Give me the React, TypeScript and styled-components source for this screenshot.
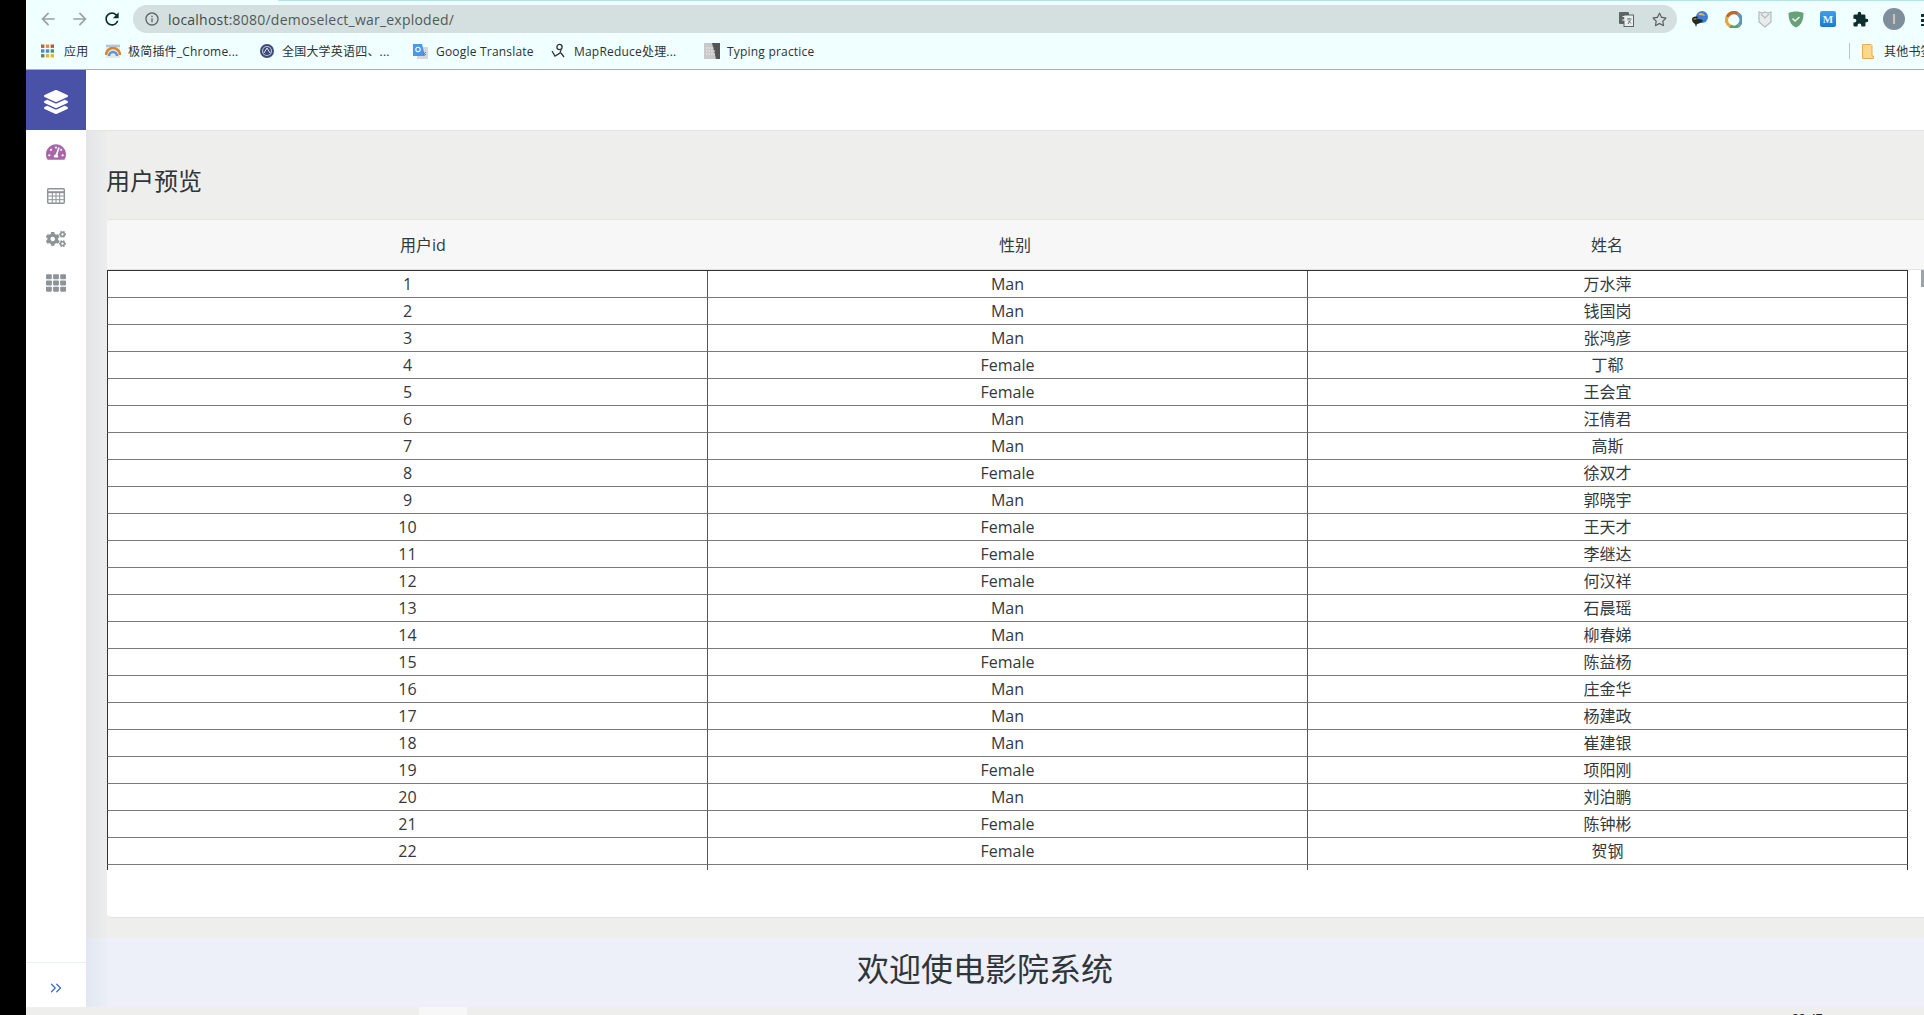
import React from 'react'
import styled, { createGlobalStyle } from 'styled-components'
import { FaLayerGroup, FaTachometerAlt, FaCogs, FaTh, FaRegStar } from 'react-icons/fa'
import { MdArrowBack, MdArrowForward, MdRefresh, MdInfoOutline, MdExtension } from 'react-icons/md'
import { ChevronsRight } from 'lucide-react'

const FONT = `"Open Sans", "Noto Sans CJK SC", sans-serif`

const GlobalStyle = createGlobalStyle`
  html, body {
    margin: 0;
    padding: 0;
    height: 100%;
    overflow: hidden;
    background: #000;
    font-family: ${FONT};
  }
`

const Screen = styled.div`
  display: flex;
  width: 1924px;
  height: 1015px;
  overflow: hidden;
`

const BlackBar = styled.div`
  flex: 0 0 26px;
  background: #000;
`

const Desktop = styled.div`
  flex: 1;
  min-width: 0;
  display: flex;
  flex-direction: column;
`

const Chrome = styled.div`
  height: 70px;
  flex: 0 0 70px;
  box-sizing: border-box;
  background: #f0ffff;
  border-bottom: 1px solid #aab0b0;
  display: flex;
  flex-direction: column;
`

const TabLine = styled.div`
  height: 1px;
  flex: none;
  background: linear-gradient(90deg, #f0ffff 252px, #b2e6e6 252px);
`

const NavRow = styled.div`
  height: 32px;
  padding-top: 4px;
  display: flex;
  align-items: flex-start;
`

const NavButtons = styled.div`
  width: 108px;
  height: 28px;
  padding-left: 12px;
  box-sizing: border-box;
  display: flex;
  align-items: center;
  gap: 12px;
`

const NavIcon = styled.span<{ $color: string }>`
  display: flex;
  width: 20px;
  color: ${(p) => p.$color};
  font-size: 20px;
`

const Omnibox = styled.div`
  width: 1544px;
  flex: none;
  height: 28px;
  box-sizing: border-box;
  background: #d4e0e0;
  border-radius: 14px;
  padding: 0 10px 0 11px;
  display: flex;
  align-items: center;
  font-size: 14px;
  color: #3f4a4b;
  letter-spacing: 0.016em;

  svg {
    flex: none;
  }
`

const UrlText = styled.span`
  margin-left: 8px;
  flex: 1;

  b {
    font-weight: 400;
    color: #4f5a5b;
  }
`

const OmniIcon = styled.span`
  display: flex;
  margin-left: 18px;
  color: #5f6464;
`

const Extensions = styled.div`
  display: flex;
  height: 28px;
  align-items: center;
  margin-left: 14px;
  gap: 16px;
`

const Avatar = styled.div`
  width: 22px;
  height: 22px;
  margin-left: -2px;
  border-radius: 50%;
  background: #7e8f9c;
  color: #dfe7ea;
  font-size: 14px;
  line-height: 22px;
  text-align: center;
`

const MenuDots = styled.div`
  width: 3px;
  height: 13px;
  flex: none;
  background: radial-gradient(circle at center, #0f2d2e 1.4px, transparent 1.6px) 0 0 / 3px 5px;
`

const Bookmarks = styled.div`
  flex: 1;
  display: flex;
  align-items: center;
  padding: 0 0 4px 15px;
  font-size: 12px;
  letter-spacing: 0.2px;
  color: #2d3233;
  white-space: nowrap;
`

const Bookmark = styled.span<{ $width: number }>`
  width: ${(p) => p.$width}px;
  flex: none;
  display: flex;
  align-items: center;
  gap: 7px;
`

const BookmarkGap = styled.span`
  flex: 1;
`

const Divider = styled.span`
  width: 1px;
  height: 16px;
  background: #bcc4c4;
  margin-right: 12px;
`

const OtherBookmarks = styled.span`
  display: flex;
  align-items: center;
  gap: 10px;
  width: 62px;
  overflow: hidden;
  flex: none;

  svg {
    flex: none;
  }
`

const Page = styled.div`
  flex: 1;
  min-height: 0;
  display: flex;
  flex-direction: column;
  background: #eeeeed;
`

const PageBody = styled.div`
  height: 937px;
  flex: none;
  display: flex;
`

const Sidebar = styled.aside`
  flex: 0 0 60px;
  background: #fff;
  display: flex;
  flex-direction: column;
`

const Logo = styled.div`
  height: 60px;
  box-sizing: border-box;
  padding-top: 3px;
  flex: none;
  background: #4a52a8;
  color: #fff;
  font-size: 24px;
  display: flex;
  align-items: center;
  justify-content: center;
`

const SideMenu = styled.nav`
  flex: 1;
  display: flex;
  flex-direction: column;
  align-items: center;
`

const SideItem = styled.div<{ $color?: string }>`
  height: 43.7px;
  display: flex;
  align-items: center;
  justify-content: center;
  color: ${(p) => p.$color || '#8e9396'};
  font-size: 20px;
`

const SideFooter = styled.div`
  height: 45px;
  flex: none;
  box-sizing: border-box;
  padding-top: 5px;
  border-top: 1px solid #ebf0f8;
  color: #3f6fd0;
  display: flex;
  align-items: center;
  justify-content: center;
`

const Main = styled.main`
  flex: 1;
  min-width: 0;
  display: flex;
  flex-direction: column;
  position: relative;
`

const EdgeShade = styled.div`
  position: absolute;
  left: 0;
  top: 61px;
  bottom: 0;
  width: 21px;
  background: linear-gradient(90deg, rgba(40, 80, 140, 0.06), rgba(40, 80, 140, 0.008));
`

const TopBar = styled.header`
  height: 61px;
  flex: none;
  background: #fff;
  border-bottom: 1px solid #e3e3e3;
  box-sizing: border-box;
`

const Content = styled.section`
  position: relative;
  flex: 1;
  min-height: 0;
  padding: 0 0 0 21px;
`

const Title = styled.h3`
  margin: 0 0 0 -1px;
  height: 88px;
  padding-top: 33px;
  box-sizing: border-box;
  font-size: 24px;
  font-weight: 400;
  line-height: 33px;
  color: #2f353a;
`

const Card = styled.div`
  width: 1900px;
  height: 699px;
  box-sizing: border-box;
  background: #fff;
  border: 1px solid #e2e2e2;
  border-left: 0;
  border-radius: 4px 0 0 4px;
  overflow: hidden;
`

const CardHeader = styled.div`
  height: 50px;
  box-sizing: border-box;
  padding: 0 20px 2px;
  background: #f7f7f7;
  border-bottom: 1px solid #e2e2e2;
  display: grid;
  grid-template-columns: repeat(3, 592px);
  align-items: center;
  text-align: center;
  font-size: 16px;
  color: #33393d;
`

const TableBox = styled.div`
  height: 600px;
  overflow: hidden;
`

const DataTable = styled.table`
  width: 1801px;
  table-layout: fixed;
  border-collapse: separate;
  border-spacing: 0;
  border-top: 1px solid #2f3336;
  font-size: 16px;
  color: #33393d;
`

const Cell = styled.td`
  height: 26px;
  width: 599px;
  padding: 0;
  line-height: 26px;
  text-align: center;
  border-bottom: 1px solid #7a7a7a;
  border-left: 1px solid #55585a;

  &:first-child {
    border-left-color: #2f3336;
  }

  &:last-child {
    width: auto;
    border-right: 1px solid #2f3336;
  }
`

const Scrollbar = styled.div`
  position: absolute;
  right: 0;
  top: 139px;
  width: 3px;
  height: 17px;
  background: #9aa5a5;
`

const Footer = styled.footer`
  height: 69px;
  flex: none;
  background: #edf0f8;
  text-align: center;
  font-size: 32px;
  line-height: 61px;
  color: #2f353a;
`

const FooterText = styled.span`
  display: inline-block;
  margin-left: -40px;
`

const StatusStrip = styled.div`
  flex: 1;
  position: relative;
  overflow: hidden;
  background: #eeeeed;
`

const StripTab = styled.div`
  position: absolute;
  left: 393px;
  top: 0;
  bottom: 0;
  width: 48px;
  background: #f7f7f7;
`

const Clock = styled.span`
  position: absolute;
  left: 1766px;
  top: 3px;
  font-size: 12px;
  color: #222;
`

const MailBadge = styled.span`
  width: 16px;
  height: 16px;
  border-radius: 2px;
  background: linear-gradient(180deg, #3ea0ea, #1a78c8);
  color: #e8f4fd;
  font: 700 11px/16px 'Liberation Serif', serif;
  text-align: center;
`

const users: [string, string][] = [
  ['Man', '万水萍'],
  ['Man', '钱国岗'],
  ['Man', '张鸿彦'],
  ['Female', '丁郗'],
  ['Female', '王会宜'],
  ['Man', '汪倩君'],
  ['Man', '高斯'],
  ['Female', '徐双才'],
  ['Man', '郭晓宇'],
  ['Female', '王天才'],
  ['Female', '李继达'],
  ['Female', '何汉祥'],
  ['Man', '石晨瑶'],
  ['Man', '柳春娣'],
  ['Female', '陈益杨'],
  ['Man', '庄金华'],
  ['Man', '杨建政'],
  ['Man', '崔建银'],
  ['Female', '项阳刚'],
  ['Man', '刘泊鹏'],
  ['Female', '陈钟彬'],
  ['Female', '贺钢'],
]

const AppsIcon = () => {
  const colors = ['#b5603f', '#d9923c', '#c9513c', '#4a86d8', '#4a86d8', '#3f9a58', '#5f8a60', '#e8b13c', '#e8b13c']
  return (
    <svg width="16" height="14" viewBox="0 0 16 14">
      {colors.map((c, i) => (
        <rect key={i} x={(i % 3) * 4.8} y={Math.floor(i / 3) * 4.8 + 0.5} width="3.4" height="3.4" fill={c} />
      ))}
    </svg>
  )
}

const RainbowIcon = () => (
  <svg width="16" height="16" viewBox="0 0 16 16">
    <rect x="1" y="1" width="14" height="14" rx="1" fill="#e6e6e6" />
    <path d="M1 12a7 7 0 0 1 14 0" fill="none" stroke="#d9822b" strokeWidth="2.5" />
    <path d="M4 13a4 4 0 0 1 8 0" fill="none" stroke="#4f9bd9" strokeWidth="2.5" />
    <rect x="1" y="2" width="14" height="2" fill="#a9c7de" />
  </svg>
)

const SealIcon = () => (
  <svg width="16" height="16" viewBox="0 0 16 16">
    <circle cx="8" cy="8" r="7" fill="#3d4a78" />
    <circle cx="8" cy="8" r="4.5" fill="none" stroke="#b9bfd4" strokeWidth="1.2" />
    <path d="M5 10l3-5 3 5" fill="none" stroke="#dfe2ea" strokeWidth="1" />
  </svg>
)

const TranslateIcon = () => (
  <svg width="17" height="17" viewBox="0 0 17 17">
    <rect x="5" y="4" width="11" height="12" fill="#d5d8da" />
    <path d="M1 1h9l3 12H1z" fill="#4a98ea" />
    <circle cx="6" cy="6.5" r="2.2" fill="none" stroke="#fff" strokeWidth="1.1" />
    <path d="M11 9l3 3M14 9l-3 3" stroke="#77797b" strokeWidth="1" />
  </svg>
)

const MapReduceIcon = () => (
  <svg width="16" height="16" viewBox="0 0 16 16">
    <path d="M1 8l3 5 5-3 1-3M10 10l3 4" fill="none" stroke="#333" strokeWidth="1.3" />
    <circle cx="8.5" cy="4" r="2.6" fill="none" stroke="#333" strokeWidth="1.3" />
  </svg>
)

const TypingIcon = () => (
  <svg width="16" height="16" viewBox="0 0 16 16">
    <rect x="0" y="0" width="16" height="16" fill="#c9c9c9" />
    <path d="M8 0h8v16H12z" fill="#555" />
    <path d="M2 5h8M2 8h9M2 11h10" stroke="#efefef" strokeWidth="1" strokeDasharray="1.5 1" />
  </svg>
)

const FolderPageIcon = () => (
  <svg width="12" height="15" viewBox="0 0 12 15">
    <path d="M.5.5h8.5l1 1v10.5h1.5v2.500H.5z" fill="#fdd78c" stroke="#e8ac4c" />
  </svg>
)

const TranslatePageIcon = () => (
  <svg width="15" height="15" viewBox="0 0 15 15">
    <rect x="0" y="0" width="10" height="12" rx="1" fill="#5f6464" />
    <rect x="5" y="3" width="9.5" height="11.5" fill="#e8eeee" stroke="#5f6464" />
    <path d="M3 8h3V4.500H3.500" fill="none" stroke="#e8eeee" strokeWidth="1" />
    <path d="M8 7h4.500M10 6v1M9 12l2.500-4M9 8.500l3 3" stroke="#5f6464" strokeWidth="0.9" fill="none" />
  </svg>
)

const GlobeIcon = () => (
  <svg width="18" height="18" viewBox="0 0 18 18">
    <circle cx="11" cy="7" r="6" fill="#3a7fd0" />
    <path d="M7 4c3-2 6-1 7 2-3-1-5 0-7-2z" fill="#e9b34a" />
    <path d="M1 9c0-2 3-3 6-2l-1 2c2 0 5 0 6 2-2 2-5 3-6 3l-1 3-1-3C2 13 1 11 1 9z" fill="#1e2b1e" />
    <path d="M2 9c1-1 3-1 4 0-1 1-3 1-4 0z" fill="#d9822b" />
  </svg>
)

const RingIcon = () => (
  <svg width="17" height="17" viewBox="0 0 17 17" fill="none" strokeWidth="3.4">
    <path d="M2.2 6A7 7 0 0 1 13 3" stroke="#c0662f" />
    <path d="M13 3a7 7 0 0 1 1 11" stroke="#5b8fc7" />
    <path d="M14 14a7 7 0 0 1-9 1" stroke="#5f9e6e" />
    <path d="M5 15a7 7 0 0 1-2.8-9" stroke="#e5a83b" />
  </svg>
)

const ShieldOutlineIcon = () => (
  <svg width="14" height="17" viewBox="0 0 14 17">
    <path d="M1 1l3 1 3-1 3 1 3-1v10l-6 5-6-5z" fill="#e8ecec" stroke="#b4bbbb" strokeWidth="1.2" />
    <path d="M3 3l4 4 4-4" fill="none" stroke="#b4bbbb" strokeWidth="1.2" />
  </svg>
)

const GuardIcon = () => (
  <svg width="16" height="17" viewBox="0 0 16 17">
    <path d="M.5 2C3 1 5 .5 8 .5s5 .5 7.500 1.500c0 7-2 12-7.500 14.500C2.500 14 .5 9 .5 2z" fill="#68a078" />
    <path d="M4.500 7.500l2.500 2.500 4.500-4" fill="none" stroke="#e9f4ec" strokeWidth="1.6" />
  </svg>
)

const GridTableIcon = () => (
  <svg width="18" height="16" viewBox="0 0 18 16" fill="none" stroke="currentColor">
    <rect x="0.7" y="0.7" width="16.6" height="14.6" rx="1" strokeWidth="1.4" />
    <path d="M1 4.200h16" strokeWidth="2" />
    <path d="M1 8h16M1 11.700h16M5.300 4v11M9 4v11M12.700 4v11" strokeWidth="1" />
  </svg>
)

export default function App() {
  return (
    <>
      <GlobalStyle />
      <Screen>
        <BlackBar />
        <Desktop>
          <Chrome>
            <TabLine />
            <NavRow>
              <NavButtons>
                <NavIcon $color="#9aa3a3">
                  <MdArrowBack />
                </NavIcon>
                <NavIcon $color="#9aa3a3">
                  <MdArrowForward />
                </NavIcon>
                <NavIcon $color="#0f2d2e">
                  <MdRefresh />
                </NavIcon>
              </NavButtons>
              <Omnibox>
                <MdInfoOutline size={16} color="#5f6464" />
                <UrlText>
                  localhost<b>:8080/demoselect_war_exploded/</b>
                </UrlText>
                <OmniIcon>
                  <TranslatePageIcon />
                </OmniIcon>
                <OmniIcon>
                  <FaRegStar size={15} />
                </OmniIcon>
              </Omnibox>
              <Extensions>
                <GlobeIcon />
                <RingIcon />
                <ShieldOutlineIcon />
                <GuardIcon />
                <MailBadge>M</MailBadge>
                <MdExtension size={17} color="#0f2d2e" />
                <Avatar>I</Avatar>
                <MenuDots />
              </Extensions>
            </NavRow>
            <Bookmarks>
              <Bookmark $width={64}>
                <AppsIcon />
                应用
              </Bookmark>
              <Bookmark $width={154}>
                <RainbowIcon />
                极简插件_Chrome...
              </Bookmark>
              <Bookmark $width={153}>
                <SealIcon />
                全国大学英语四、...
              </Bookmark>
              <Bookmark $width={139}>
                <TranslateIcon />
                Google Translate
              </Bookmark>
              <Bookmark $width={153}>
                <MapReduceIcon />
                MapReduce处理...
              </Bookmark>
              <Bookmark $width={120}>
                <TypingIcon />
                Typing practice
              </Bookmark>
              <BookmarkGap />
              <Divider />
              <OtherBookmarks>
                <FolderPageIcon />
                其他书签
              </OtherBookmarks>
            </Bookmarks>
          </Chrome>
          <Page>
            <PageBody>
              <Sidebar>
                <Logo>
                  <FaLayerGroup />
                </Logo>
                <SideMenu>
                  <SideItem $color="#a866a8">
                    <FaTachometerAlt />
                  </SideItem>
                  <SideItem>
                    <GridTableIcon />
                  </SideItem>
                  <SideItem>
                    <FaCogs />
                  </SideItem>
                  <SideItem>
                    <FaTh />
                  </SideItem>
                </SideMenu>
                <SideFooter>
                  <ChevronsRight size={18} strokeWidth={1.8} />
                </SideFooter>
              </Sidebar>
              <Main>
                <TopBar />
                <Content>
                  <Title>用户预览</Title>
                  <Card>
                    <CardHeader>
                      <span>用户id</span>
                      <span>性别</span>
                      <span>姓名</span>
                    </CardHeader>
                    <TableBox>
                      <DataTable>
                        <tbody>
                          {users.map(([gender, name], i) => (
                            <tr key={i}>
                              <Cell>{i + 1}</Cell>
                              <Cell>{gender}</Cell>
                              <Cell>{name}</Cell>
                            </tr>
                          ))}
                          <tr>
                            <Cell />
                            <Cell />
                            <Cell />
                          </tr>
                        </tbody>
                      </DataTable>
                    </TableBox>
                  </Card>
                  <Scrollbar />
                </Content>
                <Footer>
                  <FooterText>欢迎使电影院系统</FooterText>
                </Footer>
                <EdgeShade />
              </Main>
            </PageBody>
            <StatusStrip>
              <StripTab />
              <Clock>22:47</Clock>
            </StatusStrip>
          </Page>
        </Desktop>
      </Screen>
    </>
  )
}
